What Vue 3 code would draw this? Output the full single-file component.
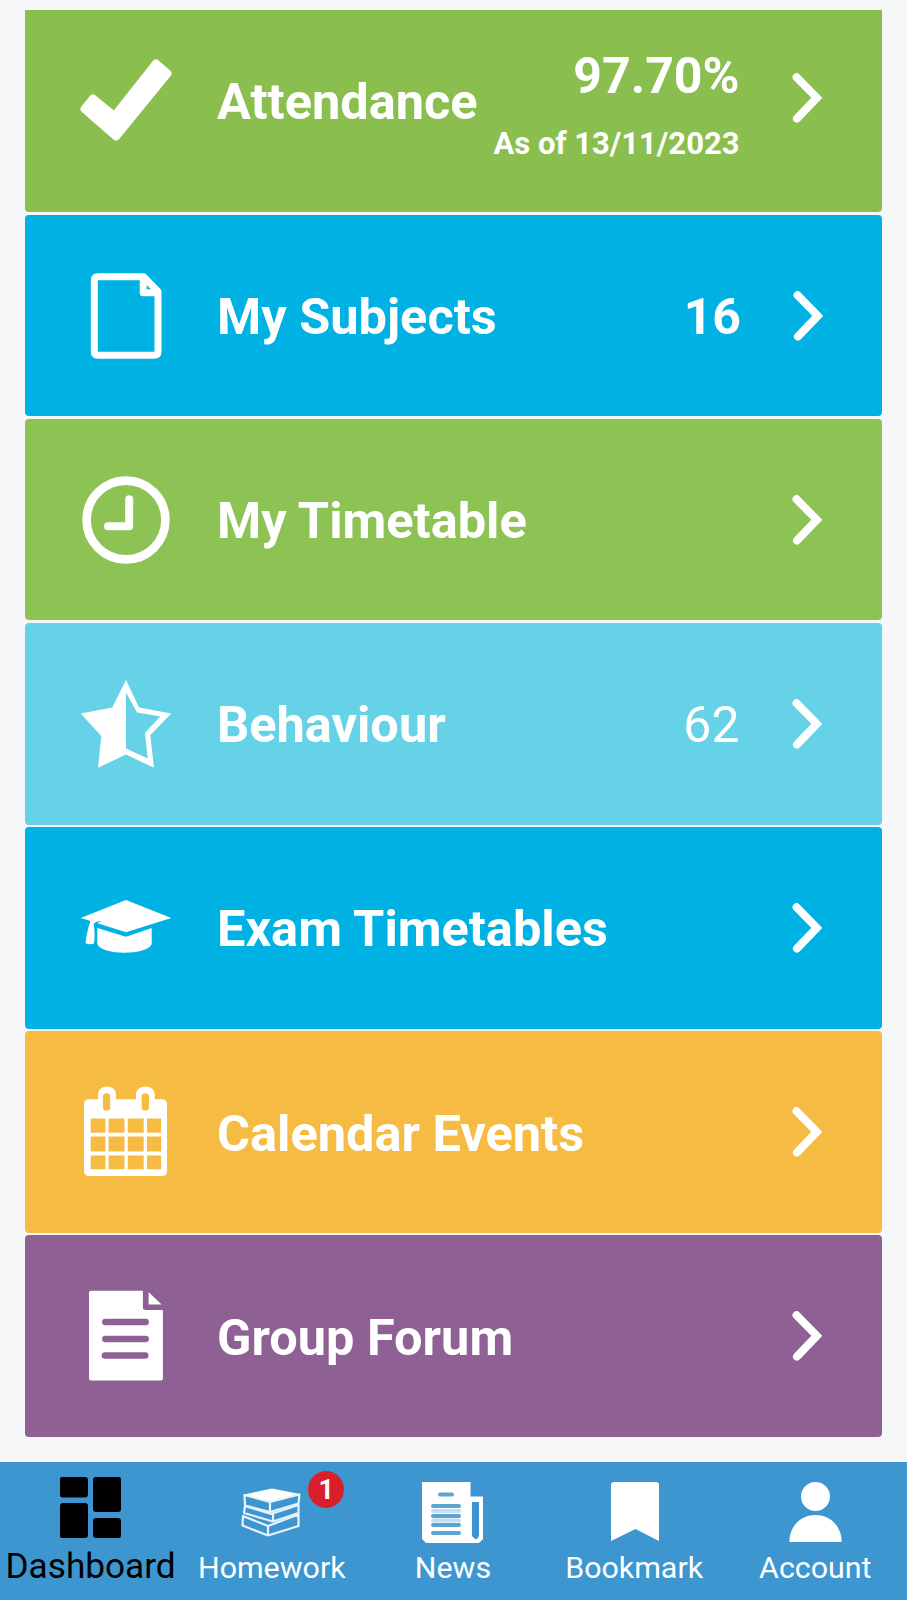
<script setup>
import { ref } from 'vue'

const activeTab = ref('dashboard')

const cards = [
  { id: 'attendance', title: 'Attendance', value: '97.70%', note: 'As of 13/11/2023' },
  { id: 'subjects', title: 'My Subjects', value: '16' },
  { id: 'timetable', title: 'My Timetable' },
  { id: 'behaviour', title: 'Behaviour', value: '62' },
  { id: 'exams', title: 'Exam Timetables' },
  { id: 'calendar', title: 'Calendar Events' },
  { id: 'forum', title: 'Group Forum' }
]

const tabs = [
  { id: 'dashboard', label: 'Dashboard' },
  { id: 'homework', label: 'Homework', badge: 1 },
  { id: 'news', label: 'News' },
  { id: 'bookmark', label: 'Bookmark' },
  { id: 'account', label: 'Account' }
]
</script>

<template>
  <div class="screen">
    <main class="cards">
      <a v-for="card in cards" :key="card.id" :class="['card', card.id]">
        <svg class="card-icon" viewBox="0 0 100 100">
          <path v-if="card.id === 'attendance'" class="solid rounded"
            d="M80 13.500L91.5 23.500L40 86.5L8.500 59L17 48.500L38.5 66Z" />
          <g v-else-if="card.id === 'subjects'" class="line" stroke-width="7">
            <path d="M22 10.7H67.5L82 25.5V85.5Q82 89.3 78 89.3H22Q18.3 89.3 18.3 85.5V14.5Q18.3 10.7 22 10.7Z" />
            <path d="M67.2 12V26.7H81" />
          </g>
          <g v-else-if="card.id === 'timetable'" class="line" stroke-width="8.6">
            <circle cx="50" cy="50" r="39.4" />
            <path d="M53.2 29.2V56.2H32" stroke-width="8" />
          </g>
          <path v-else-if="card.id === 'behaviour'" class="solid"
            d="M50 6L63 33.4L95.3 39.4L74.3 61.1L78 93.8L50 80.4L22 93.8L25.3 62.1L4.7 39.4L36.3 33.4ZM50 18.4V74.4L71.7 84.4L69 58.8L84.3 42.4L61 38.4Z" />
          <g v-else-if="card.id === 'exams'" class="solid">
            <path d="M50 22L95.3 40L50 54.3L21.5 45.3Q23 43.8 26 43.6Q20 42.5 17.5 46Q19.5 56 18 65.5Q14 67 9.5 65.3Q11 52 14.5 43L4.7 40Z" />
            <path d="M21.3 50L50 58.8L75.7 50V66C72 77.6 25 77.6 21.3 66Z" />
          </g>
          <path v-else-if="card.id === 'calendar'" class="solid"
            d="M13 17.2H22V13C22 1.8 40 1.8 40 13V17.2H60V13C60 1.8 78.7 1.8 78.7 13V17.2H86Q91 17.2 91 22V89Q91 94 86 94H13Q8 94 8 89V22Q8 17.2 13 17.2Z
               M27 14V26C27 29.4 34.2 29.4 34.2 26V14C34.2 10.4 27 10.4 27 14Z
               M65.7 14V26C65.7 29.4 73 29.4 73 26V14C73 10.4 65.7 10.4 65.7 14Z
               M14.7 36.6H29.4V50.8H14.7ZM32.6 36.6H48.5V50.8H32.6ZM51.8 36.6H67.7V50.8H51.8ZM71 36.6H85.2V50.8H71Z
               M14.7 54.5H29.4V69.6H14.7ZM32.6 54.5H48.5V69.6H32.6ZM51.8 54.5H67.7V69.6H51.8ZM71 54.5H85.2V69.6H71Z
               M14.7 73.4H29.4V87.3H14.7ZM32.6 73.4H48.5V87.3H32.6ZM51.8 73.4H67.7V87.3H51.8ZM71 73.4H85.2V87.3H71Z" />
          <g v-else>
            <path class="solid" d="M15 4.7H66.9V21.5Q66.9 24 69.4 24H86.9V92.5Q86.9 94.5 85 94.5H15Q13 94.5 13 92.5V6.7Q13 4.7 15 4.7ZM72.6 6L85.6 18.4H72.6Z" />
            <path class="rule" d="M29.4 36H69.6M29.4 53H69.6M29 69.5H69.2" />
          </g>
        </svg>
        <span class="title">{{ card.title }}</span>
        <span v-if="card.value" class="figures">
          <span class="value">{{ card.value }}</span>
          <span v-if="card.note" class="note">{{ card.note }}</span>
        </span>
        <svg class="chevron" viewBox="0 0 30 52">
          <path d="M4.6 5.2L24.8 25.8L5 46.6" />
        </svg>
      </a>
    </main>

    <nav class="tabs">
      <a v-for="tab in tabs" :key="tab.id" :class="['tab', { active: tab.id === activeTab }]" @click="activeTab = tab.id">
        <span class="tab-icon">
          <svg viewBox="0 0 61 61">
            <path v-if="tab.id === 'dashboard'"
              d="M2 0H25Q28 0 28 3V17Q28 20.5 25 20.5H3Q0 20.5 0 18V2Q0 0 2 0ZM36 0H59Q61 0 61 2V32Q61 35 58 35H36Q33 35 33 32V3Q33 0 36 0ZM3 26H25Q28 26 28 29V58Q28 61 25 61H2Q0 61 0 59V29Q0 26 3 26ZM36 41H58Q61 41 61 44V59Q61 61 59 61H36Q33 61 33 58V44Q33 41 36 41Z" />
            <g v-else-if="tab.id === 'homework'">
              <path d="M3 12.5L31 6.5L59 12L29 20.5Z" />
              <path class="book" d="M3.5 13L29 20L58.5 12.5L57.5 21.5L29 30L4 23.5ZM29 20V30" />
              <path class="book" d="M4 24L30 32L57.5 23V31L32 39.5L3 31ZM32 31.5V39.500" />
              <path class="book" d="M2 34L27 44L57.5 32.5V44L27 53.5L1.5 43.5ZM27 44V53.500" />
            </g>
            <g v-else-if="tab.id === 'news'">
              <path d="M0 0H48.5V14.5H61V57L57 61H4L0 57ZM50 20V54L53 57H55L57 54V20Z" />
              <path class="print" d="M18 12.5H30M11 24H37M11 34H37M11 43H37M11 51H37" />
              <path class="print faint" d="M11 29H37M11 38.500H37" />
            </g>
            <path v-else-if="tab.id === 'bookmark'" d="M10 0H52Q55 0 55 3V59L31.5 47L7 59V3Q7 0 10 0Z" />
            <g v-else>
              <circle cx="30.5" cy="14.5" r="14.5" />
              <path d="M4.5 60V57C8 25 53 25 56.5 57V60Z" />
            </g>
          </svg>
          <span v-if="tab.badge" class="badge">{{ tab.badge }}</span>
        </span>
        <span class="label">{{ tab.label }}</span>
      </a>
    </nav>
  </div>
</template>

<style>
body {
  margin: 0;
  background: #f5f7f9;
}
</style>

<style scoped>
.screen {
  display: flex;
  flex-direction: column;
  width: 907px;
  height: 1600px;
  overflow: hidden;
  background: #f5f7f9;
  font-family: Roboto, sans-serif;
}

.cards {
  flex: 1;
  display: flex;
  flex-direction: column;
  gap: 2.6px;
  padding: 10px 25px 0;
}

.card {
  box-sizing: border-box;
  display: flex;
  align-items: center;
  height: 201.5px;
  padding: 0 60.5px 0 51px;
  border-radius: 4px;
  color: #fff;
}

.card-icon {
  flex: none;
  width: 100px;
  height: 100px;
}

.solid {
  fill: #fff;
  fill-rule: evenodd;
}

.rounded {
  stroke: #fff;
  stroke-width: 8;
  stroke-linejoin: round;
}

.line {
  fill: none;
  stroke: #fff;
  stroke-linecap: round;
  stroke-linejoin: round;
}

.rule {
  fill: none;
  stroke: #8f6094;
  stroke-width: 6.6;
  stroke-linecap: round;
}

.title {
  flex: 1;
  margin-left: 41px;
  padding-top: 3px;
  font-size: 50.5px;
  font-weight: 700;
  line-height: 60px;
  white-space: nowrap;
}

.figures {
  display: flex;
  flex-direction: column;
  align-items: flex-end;
  margin-right: 52px;
  padding-top: 3px;
  white-space: nowrap;
}

.value {
  font-size: 50px;
  font-weight: 700;
  line-height: 60px;
}

.note {
  font-size: 31px;
  font-weight: 700;
  line-height: 36px;
}

.chevron {
  flex: none;
  width: 30px;
  height: 52px;
  fill: none;
  stroke: #fff;
  stroke-width: 8;
  stroke-linecap: round;
}

.attendance {
  height: 202.3px;
  padding-bottom: 22px;
  border-radius: 0 0 4px 4px;
  background: #8abf50;
}

.attendance .title {
  margin-right: -40px;
  padding-top: 4px;
}

.attendance .figures {
  gap: 20px;
  padding-top: 8px;
}

.attendance .chevron {
  margin-bottom: 4px;
}

.subjects {
  padding-right: 59px;
}

.subjects,
.exams {
  background: #00b1e3;
}

.timetable {
  background: #8dc255;
}

.behaviour {
  background: #65d2e8;
}

.behaviour .value {
  font-weight: 400;
}

.calendar {
  background: #f5bb43;
}

.forum {
  background: #8f6094;
}

.tabs {
  flex: none;
  display: grid;
  grid-template-columns: repeat(5, 181.2px);
  height: 138px;
  background: #3d96cf;
}

.tab {
  display: flex;
  flex-direction: column;
  align-items: center;
  padding-top: 20px;
  color: #fff;
  font-size: 30.4px;
}

.tab-icon {
  position: relative;
  height: 61px;
}

.tab-icon svg {
  display: block;
  width: 61px;
  height: 61px;
  fill: currentColor;
  fill-rule: evenodd;
  filter: blur(0.6px);
}

.book {
  fill: none;
  stroke: #e4f3fc;
  stroke-width: 2.2;
  stroke-linejoin: round;
}

.print {
  stroke: #5ba5d5;
  stroke-width: 4;
  stroke-linecap: round;
}

.faint {
  stroke: #c3dff1;
}

.label {
  margin-top: 7px;
  line-height: 36px;
}

.badge {
  position: absolute;
  top: -11px;
  left: 67px;
  width: 36px;
  height: 37px;
  border-radius: 50%;
  background: #d91f2a;
  font-size: 27px;
  font-weight: 700;
  line-height: 38px;
  text-align: center;
}

.active {
  padding-top: 15px;
  color: #000;
  font-size: 35.2px;
}

.active .label {
  margin-top: 10px;
}
</style>
